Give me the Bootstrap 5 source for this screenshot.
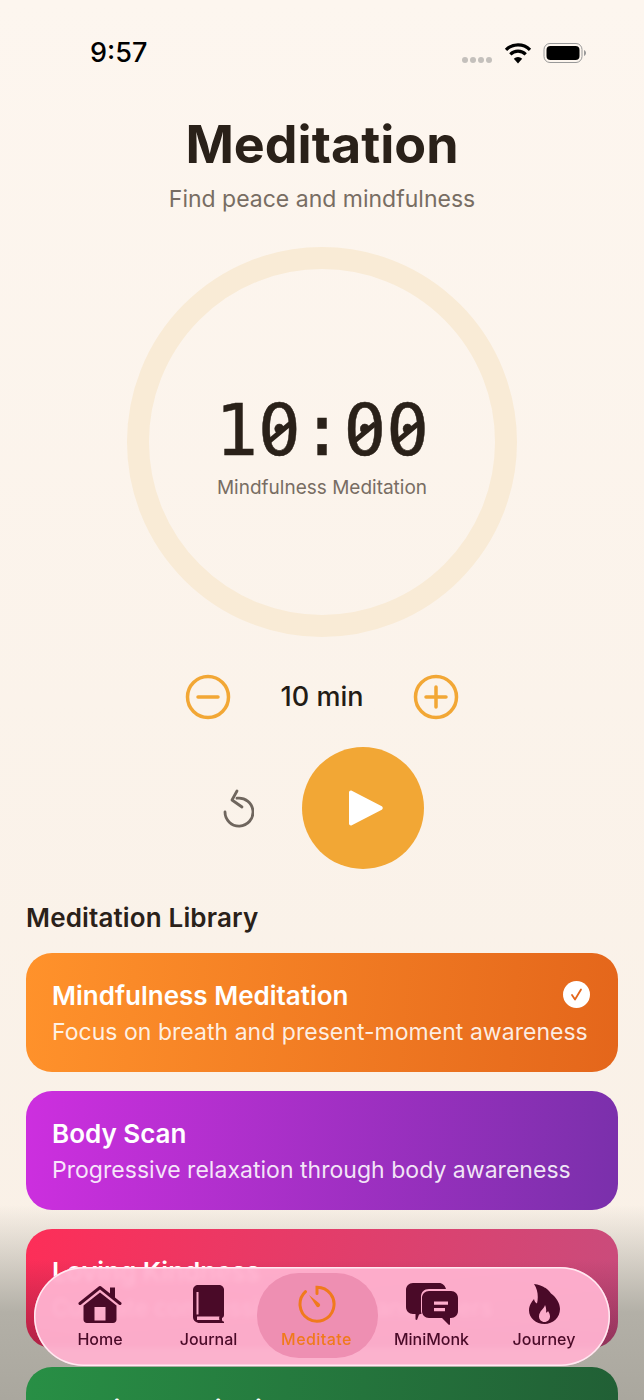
<!DOCTYPE html>
<html lang="en">
<head>
    <meta charset="UTF-8">
    <meta name="viewport" content="width=device-width, initial-scale=1.0">
    <title>Meditation</title>
    <link href="https://cdn.jsdelivr.net/npm/bootstrap@5.3.0/dist/css/bootstrap.min.css" rel="stylesheet">
    <style>
        html, body { height: 1400px; overflow: hidden; }
        body { font-family: Inter, "Noto Sans", sans-serif; color: #2a2119; background: linear-gradient(180deg, #fdf6ef 0%, #f9f0e6 100%); }
        .phone { width: 644px; height: 1400px; overflow: hidden; }
        .status-row { height: 45px; margin-top: 30px; padding: 0 57px 0 90px; }
        .clock { font-size: 27px; font-weight: 500; color: #000; line-height: 32px; }
        .dots { gap: 2px; margin-right: 12px; margin-top: 14px; }
        .dots i { width: 6px; height: 6px; border-radius: 50%; background: #c4c0bc; display: block; }
        .wifi-ico { margin-right: 11px; }
        .page-title { font-size: 52px; font-weight: 700; line-height: 62px; margin: 39px 0 0; color: #2a2119; }
        .page-sub { font-size: 23px; line-height: 32px; color: #786d63; margin-top: 7px; }
        .dial { width: 390px; height: 390px; border-radius: 50%; border: 22px solid #f9ebd6; margin: 32px auto 0; padding-top: 120px; }
        .dial-time { font-family: "DejaVu Sans Mono", monospace; font-size: 71px; line-height: 84px; color: #2a2119; -webkit-text-stroke: .5px #2a2119; }
        .slash-zero { position: relative; display: inline-block; }
        .slash-zero::after { content: ""; position: absolute; left: 50%; top: 50%; width: 27px; height: 4.500px; margin: -1px 0 0 -13.500px; background: #2a2119; transform: rotate(-40deg); }
        .dial-name { font-size: 19px; line-height: 24px; color: #786d63; margin-top: 3px; }
        .stepper { margin-top: 37px; height: 46px; gap: 49px; }
        .step-val { width: 84px; font-size: 27px; font-weight: 500; color: #231c16; white-space: nowrap; }
        .play-row { margin-top: 27px; padding-left: 218px; }
        .play-btn { width: 122px; height: 122px; border-radius: 50%; background: #f2a735; margin-left: 48px; }
        .lib-title { font-size: 26px; font-weight: 600; line-height: 32px; margin: 33px 0 19px 26px; color: #2a2119; letter-spacing: .15px; }
        .med-list { padding: 0 26px; gap: 19px; }
        .med-card { height: 119px; border-radius: 26px; padding: 25px 26px 0; color: #fff; border: 0; flex: none; }
        .med-name { font-size: 26px; font-weight: 600; line-height: 36px; }
        .med-desc { font-size: 23px; line-height: 36px; color: rgba(255,255,255,.88); white-space: nowrap; letter-spacing: .03px; }
        .grad-a { background: linear-gradient(95deg, #ff922b, #e4661b); }
        .grad-b { background: linear-gradient(95deg, #cd2fdf, #7a30ab); }
        .grad-c { background: linear-gradient(180deg, rgba(50,10,35,0) 25%, rgba(50,10,35,.38) 100%), linear-gradient(100deg, #fd2e58, #c94c7c); }
        .grad-d { background: linear-gradient(95deg, #288f45, #215f35); }
        .tick { top: 28px; right: 28px; width: 27px; height: 27px; border-radius: 50%; background: #fff; }
        .shade { left: 0; right: 0; top: 1205px; bottom: 0; background: linear-gradient(180deg, rgba(150,146,136,0) 0%, #b3b0a7 55%, #aaa79e 100%); }
        .tabbar { left: 34px; top: 1267px; width: 576px; height: 99px; border-radius: 50px; background: rgba(255,178,208,.95); -webkit-backdrop-filter: blur(2.500px); backdrop-filter: blur(2.500px); box-shadow: inset 0 0 0 1.5px rgba(255,240,245,.9); overflow: hidden; }
        .tab-pill { left: 223px; top: 6px; width: 121px; height: 85px; border-radius: 42px; background: #ee8fb2; }
        .tab-item { top: 18px; width: 100px; margin-left: -50px; color: #4a0a28; font-size: 16px; line-height: 20px; font-weight: 500; white-space: nowrap; text-align: center; }
        .tab-ico { height: 38px; margin-bottom: 6px; }
        .tab-on { color: #f07a1c; letter-spacing: .45px; }
    </style>
</head>
<body>
<div class="phone position-relative">
    <div class="shade position-absolute"></div>
    <div class="status-row d-flex justify-content-between align-items-center">
        <div class="clock">9:57</div>
        <div class="d-flex align-items-center">
            <div class="dots d-flex"><i></i><i></i><i></i><i></i></div>
            <svg class="wifi-ico" width="28" height="22" viewBox="0 0 28 22"><path d="M14 21.500 9.800 16.800a6 6 0 0 1 8.400 0Z" fill="#000"/><path d="M6.300 12.300a11 11 0 0 1 15.400 0" fill="none" stroke="#000" stroke-width="3.200"/><path d="M2 7.800a17 17 0 0 1 24 0" fill="none" stroke="#000" stroke-width="3.200"/></svg>
            <svg width="44" height="22" viewBox="0 0 44 22"><rect x="1" y="1.500" width="38" height="19" rx="6" fill="none" stroke="#999" stroke-width="1"/><rect x="3.500" y="4" width="33" height="14" rx="4" fill="#000"/><path d="M41 8v6c1.200-.5 2-1.700 2-3s-.8-2.500-2-3Z" fill="#999"/></svg>
        </div>
    </div>
    <div class="text-center">
        <h1 class="page-title">Meditation</h1>
        <div class="page-sub">Find peace and mindfulness</div>
    </div>
    <div class="dial d-flex flex-column align-items-center">
        <div class="dial-time">1<span class="slash-zero">0</span>:<span class="slash-zero">0</span><span class="slash-zero">0</span></div>
        <div class="dial-name">Mindfulness Meditation</div>
    </div>
    <div class="stepper d-flex justify-content-center align-items-center">
        <svg width="46" height="46" viewBox="0 0 46 46"><circle cx="23" cy="23" r="20.500" fill="none" stroke="#f2a735" stroke-width="3.500"/><path d="M13 23h20" stroke="#f2a735" stroke-width="3.500" stroke-linecap="round"/></svg>
        <div class="step-val text-center">10 min</div>
        <svg width="46" height="46" viewBox="0 0 46 46"><circle cx="23" cy="23" r="20.500" fill="none" stroke="#f2a735" stroke-width="3.500"/><path d="M13 23h20M23 13v20" stroke="#f2a735" stroke-width="3.500" stroke-linecap="round"/></svg>
    </div>
    <div class="play-row d-flex align-items-center">
        <svg width="36" height="40" viewBox="0 0 36 40"><path d="M19 10.200A14 14 0 1 1 7 24" fill="none" stroke="#6f665e" stroke-width="2.800" stroke-linecap="round"/><path d="M19 3l-5 9 10 7" fill="none" stroke="#6f665e" stroke-width="2.800" stroke-linecap="round" stroke-linejoin="round"/></svg>
        <div class="play-btn d-flex align-items-center justify-content-center">
            <svg class="ms-1" width="39" height="38" viewBox="0 0 39 38"><path d="M3 3.500v31c0 1.500 1.500 2.400 2.800 1.700l30-15.500c1.300-.8 1.300-2.600 0-3.400L5.800 1.800C4.500 1.100 3 2 3 3.500Z" fill="#fff"/></svg>
        </div>
    </div>
    <h2 class="lib-title">Meditation Library</h2>
    <div class="med-list d-flex flex-column position-relative">
        <div class="card med-card grad-a position-relative">
            <div class="med-name">Mindfulness Meditation</div>
            <div class="med-desc">Focus on breath and present-moment awareness</div>
            <div class="tick position-absolute d-flex align-items-center justify-content-center">
                <svg width="15" height="15" viewBox="0 0 15 15"><path d="M3 8l3 4.500L12 2.500" fill="none" stroke="#e4661b" stroke-width="1.800" stroke-linecap="round" stroke-linejoin="round"/></svg>
            </div>
        </div>
        <div class="card med-card grad-b">
            <div class="med-name">Body Scan</div>
            <div class="med-desc">Progressive relaxation through body awareness</div>
        </div>
        <div class="card med-card grad-c">
            <div class="med-name">Loving Kindness</div>
            <div class="med-desc">Cultivate compassion for self and others</div>
        </div>
        <div class="card med-card grad-d">
            <div class="med-name">Walking Meditation</div>
        </div>
    </div>
    <div class="tabbar position-absolute">
        <div class="tab-pill position-absolute"></div>
        <div class="tab-item position-absolute" style="left:66px">
            <div class="tab-ico d-flex justify-content-center align-items-center">
                <svg width="44" height="38" viewBox="0 0 44 38"><path d="M2 18.500 22 2.500l20 16" fill="none" stroke="#4a0a28" stroke-width="3" stroke-linecap="round" stroke-linejoin="round"/><path d="M32 2.500h5v11l-5-4Z" fill="#4a0a28"/><path fill-rule="evenodd" d="M22 7.500 5.500 20.500V34.500c0 2 1.500 3.500 3.500 3.500h26c2 0 3.500-1.500 3.500-3.500V20.500ZM16.500 22h11v13.500h-11Z" fill="#4a0a28"/></svg>
            </div>
            Home
        </div>
        <div class="tab-item position-absolute" style="left:174.500px">
            <div class="tab-ico d-flex justify-content-center align-items-center">
                <svg width="31" height="38" viewBox="0 0 31 38"><path fill-rule="evenodd" d="M5 0h21c2.500 0 5 2 5 4.500V30c0 1.500-.8 2.500-2 3v2c0 .8.8 1.500 2 1.500V38H7c-4 0-7-2.500-7-6V5C0 2 2.500 0 5 0Zm-1 31.500V35h22.500c-.5-1-.5-2.500 0-3.500ZM3.500 7v22.500h2V7Z" fill="#4a0a28"/></svg>
            </div>
            Journal
        </div>
        <div class="tab-item tab-on position-absolute" style="left:282.500px">
            <div class="tab-ico d-flex justify-content-center align-items-center">
                <svg width="38" height="38" viewBox="0 0 38 38"><path d="M19 8.500V2.200a17 17 0 1 1-11.500 4.500" fill="none" stroke="#f07a1c" stroke-width="3" stroke-linecap="round"/><path d="M11 10l10.500 8.500a2 2 0 0 1-3 3Z" fill="#f07a1c"/></svg>
            </div>
            Meditate
        </div>
        <div class="tab-item position-absolute" style="left:397.500px">
            <div class="tab-ico d-flex justify-content-center align-items-center">
                <svg width="52" height="42" viewBox="0 0 52 42"><path d="M7 0h26c3.500 0 6 2.500 7 6H23c-5 0-8 3-8 8v13c0 1.500.3 2.500 1 3.500l-3 1-2 5.500-1.500-.5V31H7c-4 0-7-3-7-7V7c0-4 3-7 7-7Z" fill="#4a0a28"/><path fill-rule="evenodd" d="M23 8h22c4 0 7 3 7 7v13c0 4-3 7-7 7h-1v6.500l-1 .5-7-7H23c-4 0-7-3-7-7V15c0-4 3-7 7-7Zm5 10.500v3.200h14v-3.200Zm0 6.500v3.200h11V25Z" fill="#4a0a28" stroke="#ffaccb" stroke-width="1.500" paint-order="stroke"/></svg>
            </div>
            MiniMonk
        </div>
        <div class="tab-item position-absolute" style="left:510px">
            <div class="tab-ico d-flex justify-content-center align-items-center">
                <svg width="31" height="40" viewBox="0 0 31 40"><path fill-rule="evenodd" d="M5 0c7 .5 13 4 17 9.500 5.500 4 9 10 9 15.500 0 8.500-7 15-15.500 15S0 34 0 26.500c0-5 2.500-8.500 5-11.500.5 2 1.200 3.500 3 4.500C9.500 13 9 6 5 0Zm11 21c-.5 3.500-6 6-6 11.500 0 3 2.500 5.500 5.500 5.500s5.500-2.500 5.500-5.500c0-2-1-4-2-5.500-.5 1-1.500 1.500-2 1.500.5-2.500 0-5.500-1-7.500Z" fill="#4a0a28"/></svg>
            </div>
            Journey
        </div>
    </div>
</div>
<script src="https://cdn.jsdelivr.net/npm/bootstrap@5.3.0/dist/js/bootstrap.bundle.min.js"></script>
</body>
</html>
